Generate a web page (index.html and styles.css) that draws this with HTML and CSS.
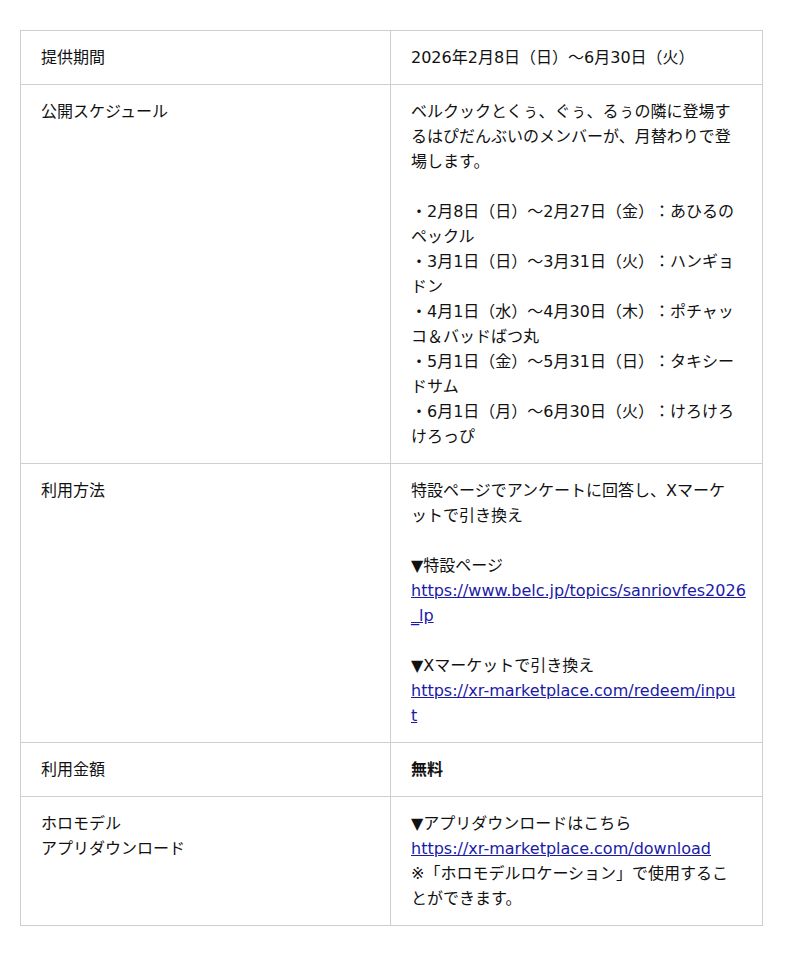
FILE: index.html
```html
<!DOCTYPE html>
<html lang="ja">
<head>
<meta charset="utf-8">
<title>提供期間</title>
<link rel="stylesheet" href="styles.css">
</head>
<body>
<div class="wrap">
<table class="info">
  <colgroup>
    <col class="col-head">
    <col class="col-body">
  </colgroup>
  <tr>
    <th>提供期間</th>
    <td>2026年2月8日（日）〜6月30日（火）</td>
  </tr>
  <tr>
    <th>公開スケジュール</th>
    <td>ベルクックとくぅ、ぐぅ、るぅの隣に登場するはぴだんぶいのメンバーが、月替わりで登場します。<br><br>・2月8日（日）〜2月27日（金）：あひるのペックル<br>・3月1日（日）〜3月31日（火）：ハンギョドン<br>・4月1日（水）〜4月30日（木）：ポチャッコ＆バッドばつ丸<br>・5月1日（金）〜5月31日（日）：タキシードサム<br>・6月1日（月）〜6月30日（火）：けろけろけろっぴ</td>
  </tr>
  <tr>
    <th>利用方法</th>
    <td>特設ページでアンケートに回答し、Xマーケットで引き換え<br><br>▼特設ページ<br><a class="url" href="#"><span class="url-run">https://www.belc.jp/topics/sanriovfes2026</span>_lp</a><br><br>▼Xマーケットで引き換え<br><a class="url" href="#">https://xr-marketplace.com/redeem/input</a></td>
  </tr>
  <tr>
    <th>利用金額</th>
    <td><strong>無料</strong></td>
  </tr>
  <tr>
    <th>ホロモデル<br>アプリダウンロード</th>
    <td>▼アプリダウンロードはこちら<br><a class="url" href="#">https://xr-marketplace.com/download</a><br>※「ホロモデルロケーション」で使用することができます。</td>
  </tr>
</table>
</div>
</body>
</html>
```
FILE: styles.css
```css
html, body {
  margin: 0;
  padding: 0;
  background: #fff;
}
body {
  font-family: "DejaVu Sans", "Noto Sans CJK JP", sans-serif;
  font-size: 16px;
  line-height: 25px;
  color: #111;
  text-spacing-trim: space-all;
}
.wrap {
  padding: 30px 38px 30px 20px;
}
.info {
  width: 742px;
  border-collapse: collapse;
  table-layout: fixed;
  border: 1px solid #dcdcdc;
}
.col-head {
  width: 370px;
}
.col-body {
  width: 372px;
}
.info th,
.info td {
  text-align: left;
  vertical-align: top;
  font-weight: normal;
  padding: 14px 22px 14px 20px;
  border: 1px solid #cfcfcf;
}
.info strong {
  font-weight: bold;
}
.url {
  color: #1a1aa8;
  text-decoration: underline;
  word-break: break-all;
}
.url-run {
  white-space: nowrap;
}
```
